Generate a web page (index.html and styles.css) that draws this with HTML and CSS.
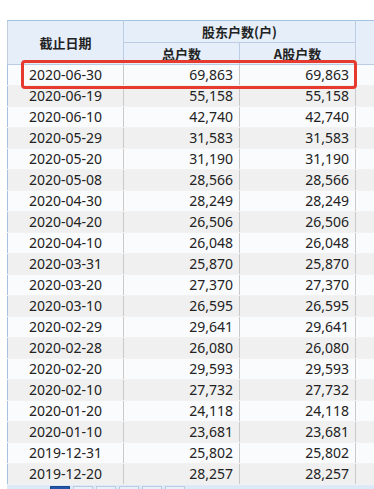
FILE: index.html
```html
<!DOCTYPE html>
<html lang="zh">
<head>
<meta charset="utf-8">
<link rel="stylesheet" href="styles.css">
</head>
<body>
<div class="wrap">
  <table class="grid">
    <colgroup><col class="c1"><col class="c2"><col class="c3"><col class="c4"></colgroup>
    <thead>
      <tr class="h1">
        <th rowspan="2">截止日期</th>
        <th colspan="2" class="group">股东户数(户)</th>
        <th rowspan="2"></th>
      </tr>
      <tr class="h2">
        <th>总户数</th>
        <th>A股户数</th>
      </tr>
    </thead>
    <tbody>
      <tr><td class="d">2020-06-30</td><td class="n">69,863</td><td class="n">69,863</td><td></td></tr>
      <tr><td class="d">2020-06-19</td><td class="n">55,158</td><td class="n">55,158</td><td></td></tr>
      <tr><td class="d">2020-06-10</td><td class="n">42,740</td><td class="n">42,740</td><td></td></tr>
      <tr><td class="d">2020-05-29</td><td class="n">31,583</td><td class="n">31,583</td><td></td></tr>
      <tr><td class="d">2020-05-20</td><td class="n">31,190</td><td class="n">31,190</td><td></td></tr>
      <tr><td class="d">2020-05-08</td><td class="n">28,566</td><td class="n">28,566</td><td></td></tr>
      <tr><td class="d">2020-04-30</td><td class="n">28,249</td><td class="n">28,249</td><td></td></tr>
      <tr><td class="d">2020-04-20</td><td class="n">26,506</td><td class="n">26,506</td><td></td></tr>
      <tr><td class="d">2020-04-10</td><td class="n">26,048</td><td class="n">26,048</td><td></td></tr>
      <tr><td class="d">2020-03-31</td><td class="n">25,870</td><td class="n">25,870</td><td></td></tr>
      <tr><td class="d">2020-03-20</td><td class="n">27,370</td><td class="n">27,370</td><td></td></tr>
      <tr><td class="d">2020-03-10</td><td class="n">26,595</td><td class="n">26,595</td><td></td></tr>
      <tr><td class="d">2020-02-29</td><td class="n">29,641</td><td class="n">29,641</td><td></td></tr>
      <tr><td class="d">2020-02-28</td><td class="n">26,080</td><td class="n">26,080</td><td></td></tr>
      <tr><td class="d">2020-02-20</td><td class="n">29,593</td><td class="n">29,593</td><td></td></tr>
      <tr><td class="d">2020-02-10</td><td class="n">27,732</td><td class="n">27,732</td><td></td></tr>
      <tr><td class="d">2020-01-20</td><td class="n">24,118</td><td class="n">24,118</td><td></td></tr>
      <tr><td class="d">2020-01-10</td><td class="n">23,681</td><td class="n">23,681</td><td></td></tr>
      <tr><td class="d">2019-12-31</td><td class="n">25,802</td><td class="n">25,802</td><td></td></tr>
      <tr><td class="d">2019-12-20</td><td class="n">28,257</td><td class="n">28,257</td><td></td></tr>
    </tbody>
  </table>
  <div class="pager">
    <span class="pg on"></span><span class="pg"></span><span class="pg"></span><span class="pg"></span><span class="pg"></span><span class="pg"></span>
  </div>
  <div class="highlight"></div>
</div>
</body>
</html>
```

FILE: styles.css
```css
html, body {
  margin: 0;
  padding: 0;
  background: #ffffff;
  overflow: hidden;
}
body {
  font-family: "Noto Sans", "Noto Sans CJK SC", sans-serif;
  font-size: 14px;
  color: #222;
}
.wrap {
  position: relative;
  box-sizing: border-box;
  padding-top: 20px;
  padding-left: 7px;
  width: 374px;
  height: 489px;
  overflow: hidden;
}
.grid {
  border-collapse: collapse;
  table-layout: fixed;
  width: 408px;
  border-left: 1px solid #a6c2e2;
}
.c1 { width: 116px; }
.c2 { width: 116px; }
.c3 { width: 116px; }
.c4 { width: 60px; }
.grid th {
  background: #e5eef9;
  font-weight: 700;
  font-family: "Noto Sans CJK SC", sans-serif;
  font-size: 13px;
  height: 21px;
  padding: 0;
  border: 1px solid #bccde3;
  border-left-color: #c3cfdf;
  line-height: 20px;
  color: #222;
}
.grid thead tr.h1 th { border-top: 1px solid #a6c2e2; }
.grid td {
  height: 20px;
  padding: 0 6px;
  border-right: 1px solid #c9c9c9;
  border-bottom: 1px solid #f2f2f2;
  line-height: 20px;
  white-space: nowrap;
}
.grid tbody tr:nth-child(odd) td { background: #fafbfd; }
.grid tbody tr:nth-child(even) td { background: #f0f0f0; }
.grid td.d { text-align: center; }
.grid td.n { text-align: right; }
.pager {
  display: flex;
  gap: 3px;
  padding: 1px 0 4px 43px;
  background: #dde9f6;
  height: 20px;
  width: 400px;
}
.pg {
  width: 18px;
  height: 18px;
  border: 1px solid #b9cce6;
  background: #e9f0f9;
}
.pg.on {
  background: #2356a8;
  border-color: #1b4a93;
}
.highlight {
  position: absolute;
  left: 21px;
  top: 60px;
  width: 330px;
  height: 23px;
  border: 3px solid #e63a2e;
  border-radius: 4px;
}
```
